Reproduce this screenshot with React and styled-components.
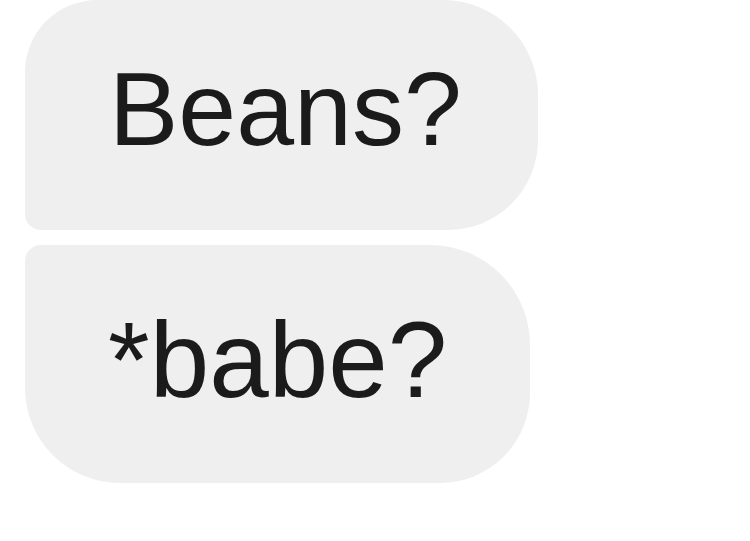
import React from "react";
import styled, { createGlobalStyle } from "styled-components";

const Global = createGlobalStyle`
  html, body { margin: 0; padding: 0; background: #ffffff; }
  body { font-family: "Liberation Sans", Arial, sans-serif; }
`;

const Thread = styled.div`
  display: flex;
  flex-direction: column;
  align-items: flex-start;
  gap: 15px;
  padding: 0 0 0 25px;
  width: 750px;
  height: 541px;
  box-sizing: border-box;
`;

const Bubble = styled.div`
  display: flex;
  align-items: center;
  box-sizing: border-box;
  width: ${(p) => p.$w}px;
  height: ${(p) => p.$h}px;
  padding: 0 0 ${(p) => p.$pb}px ${(p) => p.$pl}px;
  background: #efefef;
  border-radius: ${(p) => p.$radius};
  color: #1b1b1b;
  font-size: ${(p) => p.$size}px;
  line-height: 1;
  letter-spacing: 0;
  white-space: nowrap;
`;

export default function App() {
  return (
    <>
      <Global />
      <Thread>
        <Bubble $w={513} $h={230} $pl={84} $pb={12} $size={104} $radius="72px 95px 90px 16px">
          Beans?
        </Bubble>
        <Bubble $w={505} $h={238} $pl={83} $pb={8} $size={107} $radius="16px 100px 90px 95px">
          *babe?
        </Bubble>
      </Thread>
    </>
  );
}
